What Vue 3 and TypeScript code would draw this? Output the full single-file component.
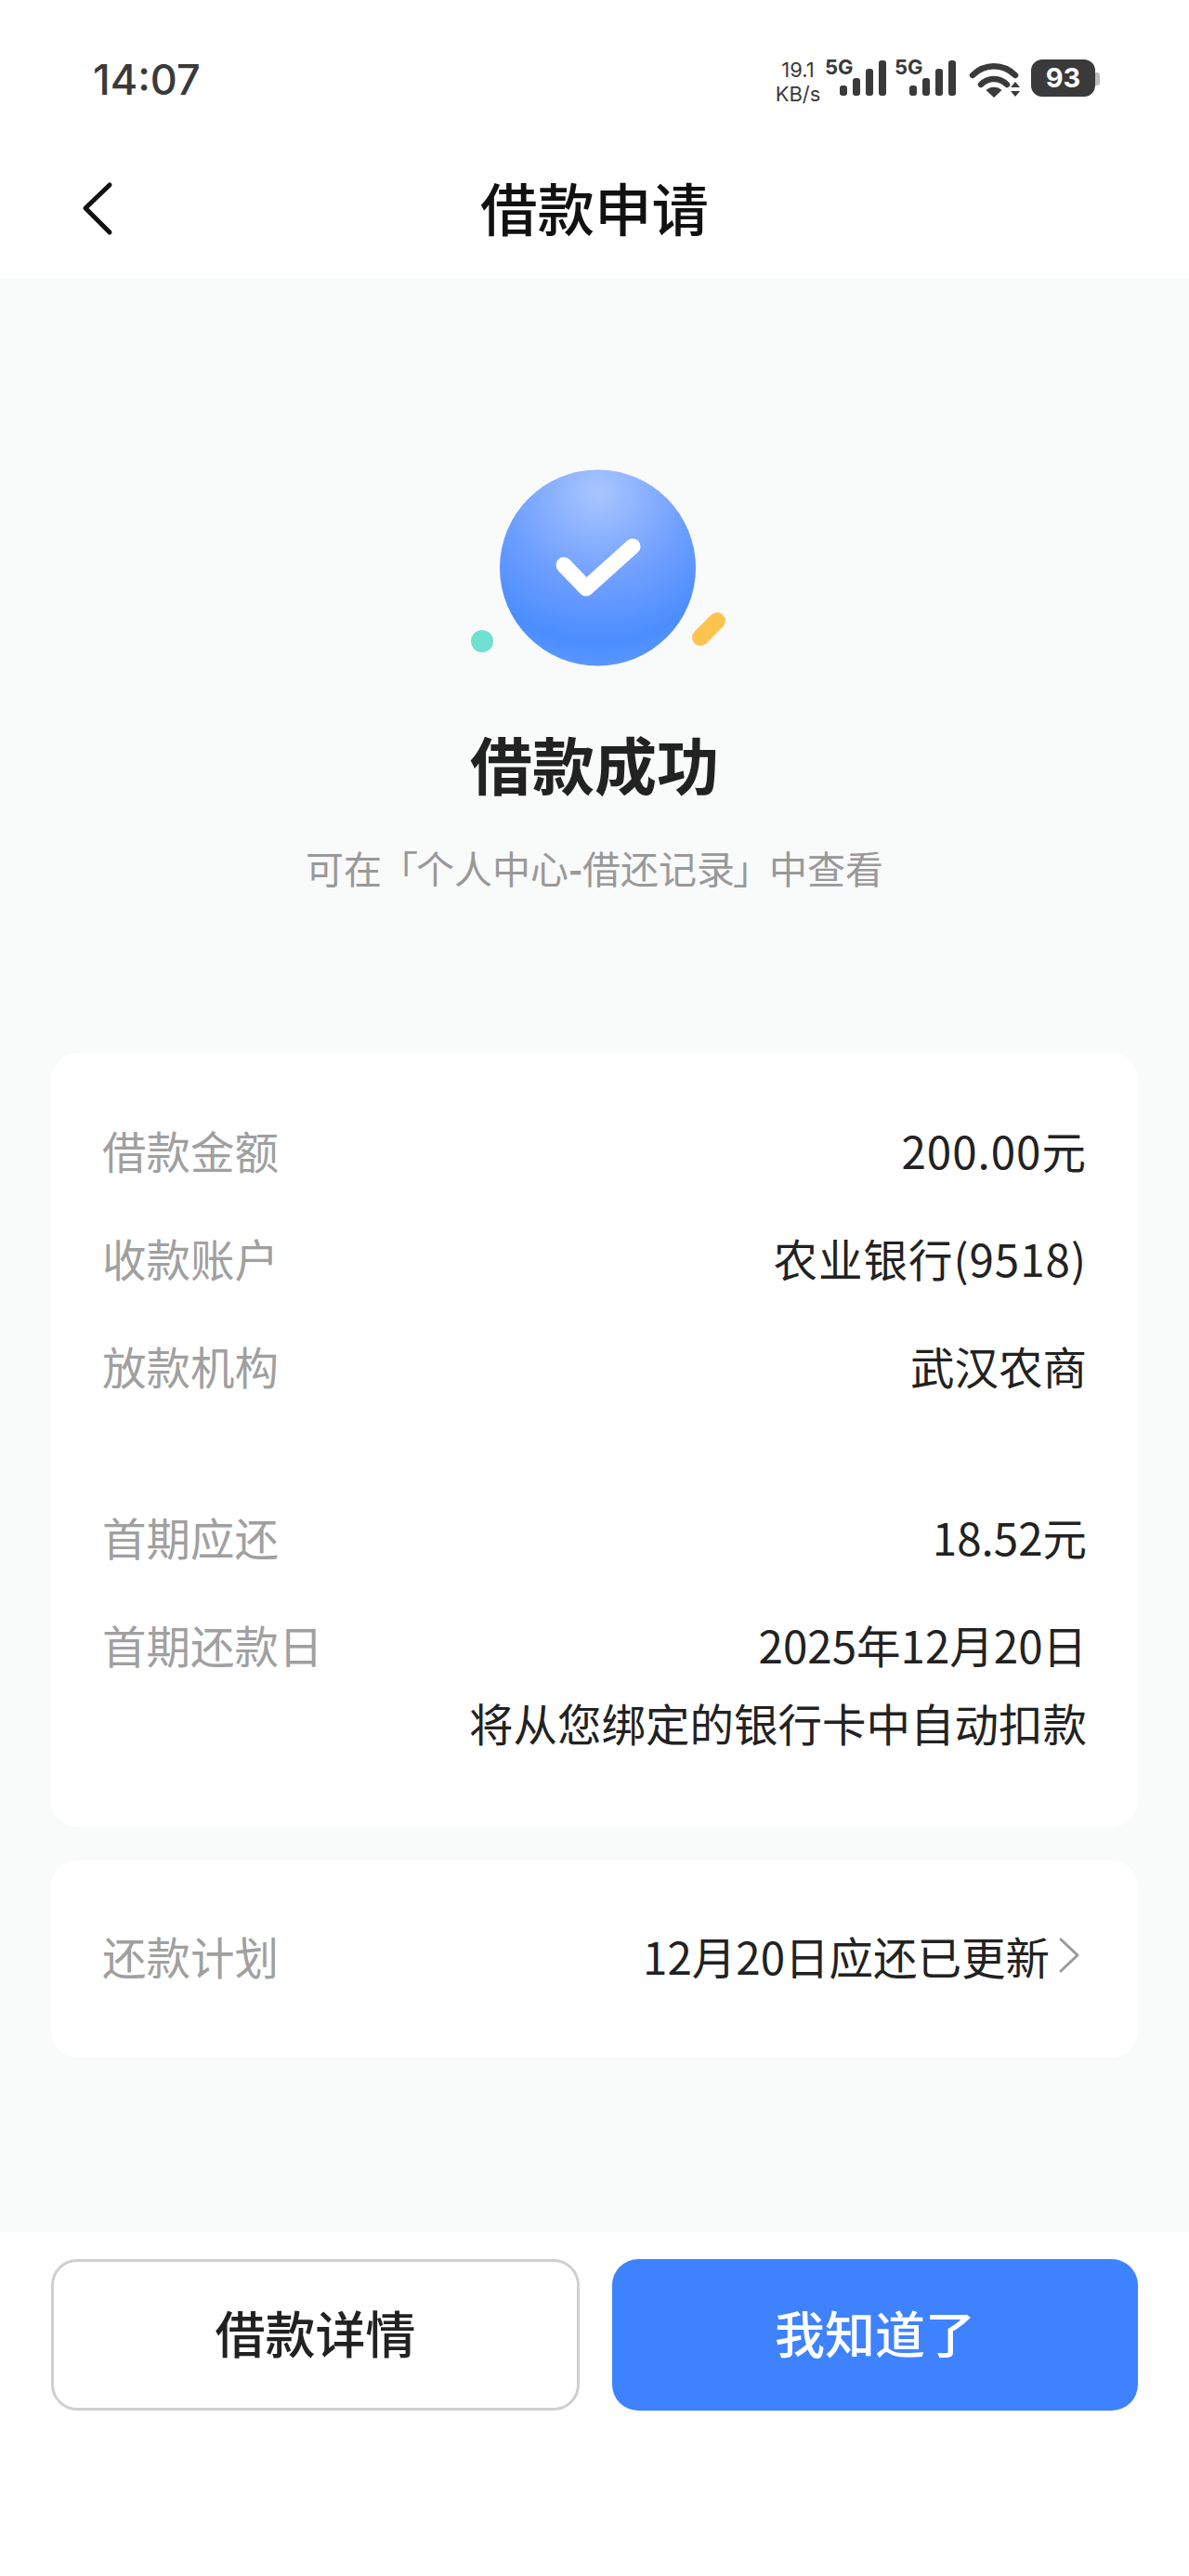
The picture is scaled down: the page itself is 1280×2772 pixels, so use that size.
<script setup lang="ts">
interface Row { label: string; value: string; wide?: boolean }
const groupA: Row[] = [
  { label: '借款金额', value: '200.00元', wide: true },
  { label: '收款账户', value: '农业银行(9518)', wide: true },
  { label: '放款机构', value: '武汉农商' },
]
const groupB: Row[] = [
  { label: '首期应还', value: '18.52元' },
  { label: '首期还款日', value: '2025年12月20日' },
]
const barHeights: number[] = [11, 19, 29, 38]
</script>

<template>
  <div class="page">
    <header class="top">
      <div class="status">
        <span class="time">14:07</span>
        <div class="indicators">
          <div class="speed"><span>19.1</span><span>KB/s</span></div>
          <div class="sim">
            <span class="g">5G</span>
            <div class="bars"><i v-for="h in barHeights" :key="h" class="bar" :style="{ height: h + 'px' }"></i></div>
          </div>
          <div class="sim sim2">
            <span class="g">5G</span>
            <div class="bars"><i v-for="h in barHeights" :key="h" class="bar" :style="{ height: h + 'px' }"></i></div>
          </div>
          <svg class="wifi" width="56" height="40" viewBox="0 0 56 40">
            <path d="M3 15 C16 2 36 2 49 15" fill="none" stroke="#3a3a3a" stroke-width="6.5" stroke-linecap="round" />
            <path d="M12 25 C20 17 32 17 40 25" fill="none" stroke="#3a3a3a" stroke-width="6.5" stroke-linecap="round" />
            <path d="M17.5 31 C22 26.5 30 26.5 34.5 31 L26 39 Z" fill="#3a3a3a" />
            <path d="M44 28 L49 22 L54 28 Z" fill="#3a3a3a" />
            <path d="M44 32 L49 38 L54 32 Z" fill="#3a3a3a" />
          </svg>
          <div class="battery"><span class="level">93</span><i class="tip"></i></div>
        </div>
      </div>
      <div class="nav">
        <svg class="back" width="40" height="64" viewBox="0 0 40 64">
          <path d="M34 6 L8 31 L34 57" fill="none" stroke="#111" stroke-width="5" stroke-linecap="round" stroke-linejoin="round" />
        </svg>
        <h1 class="nav-title">借款申请</h1>
      </div>
    </header>

    <main class="body">
      <svg class="hero" width="360" height="260" viewBox="460 480 360 260">
        <defs>
          <radialGradient id="ball" cx="644" cy="530" r="190" gradientUnits="userSpaceOnUse">
            <stop offset="0" stop-color="#a9c6fe" />
            <stop offset="0.5" stop-color="#6f9fff" />
            <stop offset="0.85" stop-color="#4b8dff" />
            <stop offset="1" stop-color="#5a98ff" />
          </radialGradient>
        </defs>
        <circle cx="643.5" cy="611" r="105.5" fill="url(#ball)" />
        <path d="M607 608 L631 633 L681 588" fill="none" stroke="#fff" stroke-width="17" stroke-linecap="round" stroke-linejoin="round" />
        <circle cx="519" cy="690" r="12" fill="#6fe0d2" />
        <path d="M754 686 L772 668" fill="none" stroke="#fdc350" stroke-width="18" stroke-linecap="round" />
      </svg>
      <h2 class="result">借款成功</h2>
      <p class="hint">可在<span class="br">「</span>个人中心<span class="dash">-</span>借还记录<span class="br">」</span>中查看</p>

      <section class="card card-main">
        <div v-for="r in groupA" :key="r.label" class="row">
          <span class="label">{{ r.label }}</span><span class="value" :class="{ wide: r.wide }">{{ r.value }}</span>
        </div>
        <div class="group-b">
          <div v-for="r in groupB" :key="r.label" class="row">
            <span class="label">{{ r.label }}</span><span class="value">{{ r.value }}</span>
          </div>
        </div>
        <p class="note">将从您绑定的银行卡中自动扣款</p>
      </section>

      <section class="card card-plan">
        <div class="row">
          <span class="label">还款计划</span>
          <span class="value link">12月20日应还已更新
            <svg class="chev" width="24" height="40" viewBox="0 0 24 40">
              <path d="M3 3 L21 20 L3 37" fill="none" stroke="#9a9a9a" stroke-width="3" stroke-linecap="round" stroke-linejoin="round" />
            </svg>
          </span>
        </div>
      </section>
    </main>

    <footer class="foot">
      <button class="btn ghost">借款详情</button>
      <button class="btn primary">我知道了</button>
    </footer>
  </div>
</template>

<style scoped>
.page {
  width: 1280px;
  height: 2772px;
  display: flex;
  flex-direction: column;
  background: #f9fafa;
  font-family: "Noto Sans CJK SC", "Noto Sans", sans-serif;
  color: #222;
}
.top { height: 300px; background: #fff; flex: none; }
.status {
  height: 170px;
  padding: 62px 101px 0 100px;
  box-sizing: border-box;
  display: flex;
  justify-content: space-between;
  align-items: flex-start;
}
.time { font-family: "Inter", sans-serif; font-size: 45px; line-height: 48px; font-weight: 500; color: #3a3a3a; }
.indicators { display: flex; align-items: flex-start; }
.speed {
  width: 52px;
  display: flex;
  flex-direction: column;
  align-items: center;
  font-family: "Inter", sans-serif;
  font-size: 22px;
  line-height: 26px;
  color: #3a3a3a;
  margin-right: 3px;
}
.sim { position: relative; width: 75px; height: 42px; }
.g {
  position: absolute;
  left: 0;
  top: 0;
  font-family: "Inter", sans-serif;
  font-size: 22px;
  line-height: 20px;
  font-weight: 700;
  color: #3a3a3a;
}
.bars {
  position: absolute;
  left: 16px;
  top: 3px;
  height: 38px;
  display: flex;
  gap: 6px;
  align-items: flex-end;
}
.bar { display: block; width: 8px; background: #3a3a3a; border-radius: 3px; }
.sim2 { width: 81px; }
.wifi { margin-top: 4px; overflow: visible; }
.battery {
  position: relative;
  width: 69px;
  height: 40px;
  margin-left: 10px;
  margin-top: 2px;
  background: #3a3a3a;
  border-radius: 12px;
  display: flex;
  align-items: center;
  justify-content: center;
}
.level { font-family: "Inter", sans-serif; font-size: 29px; font-weight: 700; color: #fff; line-height: 40px; }
.tip {
  position: absolute;
  right: -5px;
  top: 14px;
  width: 5px;
  height: 14px;
  background: #bdbdbd;
  border-radius: 0 3px 3px 0;
}
.nav {
  position: relative;
  height: 130px;
  box-sizing: border-box;
  padding-bottom: 24px;
  display: flex;
  align-items: center;
  justify-content: center;
}
.back { position: absolute; left: 84px; top: 23px; }
.nav-title { margin: 0; font-size: 61.5px; line-height: 80px; font-weight: 500; color: #111; }

.body { flex: 1; display: flex; flex-direction: column; align-items: center; padding: 180px 55px 0; }
.hero { flex: none; display: block; }
.result { margin: 41px 0 0; font-size: 67px; line-height: 80px; font-weight: 700; color: #222; }
.hint { margin: 47px 0 0; font-size: 41px; line-height: 50px; color: #999; }
.br { margin: 0 -2px; }
.dash { font-weight: 700; }

.card { width: 100%; background: #fff; border-radius: 28px; box-sizing: border-box; padding: 0 55px; }
.card-main { margin-top: 175px; padding-top: 46px; height: 833px; }
.group-b { margin-top: 68px; }
.row { height: 116px; display: flex; justify-content: space-between; align-items: center; font-size: 47.5px; }
.label { color: #a0a0a0; }
.value { color: #222; }
.wide { letter-spacing: 1px; }
.note { margin: -31px 0 0; text-align: right; font-size: 47.5px; line-height: 116px; color: #222; }
.card-plan { margin-top: 36px; height: 212px; padding-top: 44px; }
.link { display: flex; align-items: center; gap: 9px; margin-right: 7px; }
.chev { flex: none; }

.foot {
  height: 370px;
  flex: none;
  box-sizing: border-box;
  background: #fff;
  padding: 29px 55px 0;
  display: flex;
  gap: 35px;
  align-items: flex-start;
}
.btn {
  height: 163px;
  border-radius: 28px;
  font-family: inherit;
  font-size: 54px;
  font-weight: 500;
  padding: 0 0 6px;
  box-sizing: border-box;
}
.ghost { width: 569px; border: 3px solid #cfcfd3; background: #fff; color: #222; }
.primary { width: 566px; border: 0; background: #3e82ff; color: #fff; }
</style>
